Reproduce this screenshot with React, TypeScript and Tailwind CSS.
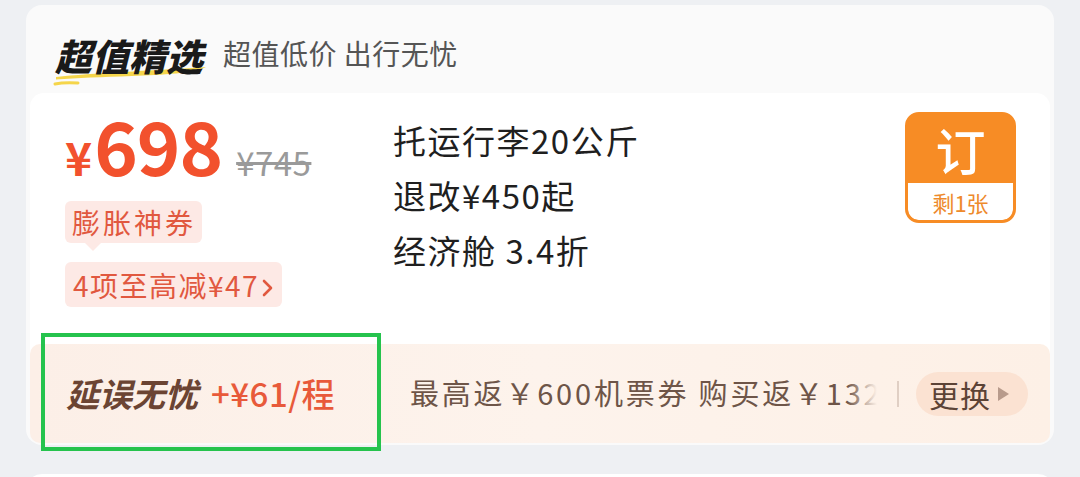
import React from "react";

const font = { fontFamily: '"Noto Sans CJK SC", "Noto Sans", sans-serif' } as React.CSSProperties;

export default function App() {
  return (
    <div
      className="relative w-[1080px] h-[477px] overflow-hidden bg-[#eef0f3] pt-[5px] px-[26px]"
      style={font}
    >
      <div className="h-[440px] rounded-[16px] bg-[#fafafa] flex flex-col">
        {/* header */}
        <div className="h-[88px] flex items-start pl-[29px] pt-[30px]">
          <div className="relative h-[40px] flex items-center">
            <span className="relative z-10 text-[37px] font-black italic text-[#1a1a1a] leading-none tracking-[0px]">
              超值精选
            </span>
            <svg
              className="absolute left-[-3px] top-[31px] z-0"
              width="158"
              height="22"
              viewBox="0 0 158 22"
            >
              <path
                d="M4 11 C 40 7, 95 5, 154 1 C 144 7, 110 9, 80 10 C 50 11, 25 12, 4 13.5 Z"
                fill="#f5d54a"
              />
              <path d="M3 18 C 10 16.5, 18 16.5, 26 17" stroke="#f5d54a" strokeWidth="3" fill="none" strokeLinecap="round" />
            </svg>
          </div>
          <span className="ml-[20px] mt-[4px] text-[28px] tracking-[0.5px] text-[#555555] leading-none">超值低价 出行无忧</span>
        </div>

        {/* inner card */}
        <div className="flex-1 mx-[4px] mb-[2px] rounded-[14px] bg-white flex flex-col">
          <div className="flex-1 flex pl-[35px] pr-[34px] pt-[14px]">
            {/* left */}
            <div className="w-[328px] flex flex-col">
              <div className="flex items-baseline h-[68px]">
                <span className="text-[46px] font-bold text-[#f2512d] leading-none">¥</span>
                <span className="ml-[2px] text-[74px] font-bold text-[#f2512d] leading-none tracking-[-1px]">698</span>
                <span className="ml-[14px] text-[33px] text-[#9a9a9a] line-through leading-none tracking-[0.5px]">¥745</span>
              </div>
              <div className="mt-[26px] flex flex-col items-start">
                <div className="relative rounded-[6px] bg-[#fde9e5] pl-[7px] pr-[6px] h-[42px] flex items-center">
                  <span className="text-[28px] tracking-[3px] text-[#e1583f] leading-none">膨胀神券</span>
                  <div className="absolute left-[20px] bottom-[-8px] w-0 h-0 border-l-[8px] border-r-[8px] border-t-[8px] border-l-transparent border-r-transparent border-t-[#fde9e5]" />
                </div>
                <div className="mt-[19px] rounded-[6px] bg-[#fde9e5] pl-[8px] pr-[8px] h-[45px] flex items-center">
                  <span className="text-[28px] tracking-[1.5px] text-[#e1583f] leading-none">4项至高减¥47</span>
                  <svg width="12" height="20" viewBox="0 0 12 20" className="ml-[3px] mt-[6px]">
                    <path d="M2 3 L9 10 L2 17" stroke="#e1583f" strokeWidth="2.6" fill="none" strokeLinecap="round" strokeLinejoin="round" />
                  </svg>
                </div>
              </div>
            </div>
            {/* middle */}
            <div className="flex-1 flex flex-col pt-[6px] text-[33px] tracking-[1.5px] text-[#1f1f1f] leading-[55px]">
              <span>托运行李20公斤</span>
              <span>退改¥450起</span>
              <span>经济舱 3.4折</span>
            </div>
            {/* button */}
            <div className="pt-[5px]">
              <div className="w-[111px] h-[111px] rounded-[14px] border-[3px] border-[#f78c25] bg-[#f78c25] flex flex-col overflow-hidden">
                <div className="h-[68px] flex items-center justify-center">
                  <span className="text-[50px] font-medium text-white leading-none">订</span>
                </div>
                <div className="flex-1 bg-white rounded-b-[10px] flex items-center justify-center">
                  <span className="text-[22px] text-[#ee8a2c] leading-none">剩1张</span>
                </div>
              </div>
            </div>
          </div>

          {/* bottom promo band */}
          <div className="h-[99px] rounded-[10px] bg-gradient-to-r from-[#fcefe7] via-[#fdf3ec] to-[#fdf0e6] flex items-center pl-[36px] pr-[22px]">
            <div className="w-[344px] flex items-center">
              <span className="text-[33px] font-bold italic text-[#6b4433] leading-none">延误无忧</span>
              <span className="ml-[13px] text-[33px] font-medium tracking-[0.5px] text-[#e85a3a] leading-none">+¥61/程</span>
            </div>
            <div className="relative w-[467px] overflow-hidden whitespace-nowrap">
              <span className="text-[29px] tracking-[2.8px] text-[#6e5548] leading-none">最高返￥600机票券 购买返￥132</span>
              <div className="absolute right-0 top-0 bottom-0 w-[30px] bg-gradient-to-r from-transparent to-[#fdf1e8]" />
            </div>
            <div className="ml-[20px] w-[2px] h-[26px] bg-[#e0cfc4]" />
            <div className="ml-[17px] h-[44px] flex-1 rounded-full bg-[#fbe2d2] flex items-center pl-[13px]">
              <span className="text-[30px] tracking-[1px] text-[#5c4336] leading-none">更换</span>
              <svg width="14" height="18" viewBox="0 0 14 18" className="ml-[5px]">
                <path d="M2 2 L13 9 L2 16 Z" fill="#b89b8c" />
              </svg>
            </div>
          </div>
        </div>
      </div>

      {/* next card peek */}
      <div className="mt-[29px] h-[20px] rounded-t-[16px] bg-white" />

      {/* green annotation box */}
      <div className="absolute left-[41px] top-[333px] w-[340px] h-[118px] border-[4px] border-[#25c34d]" />
    </div>
  );
}
